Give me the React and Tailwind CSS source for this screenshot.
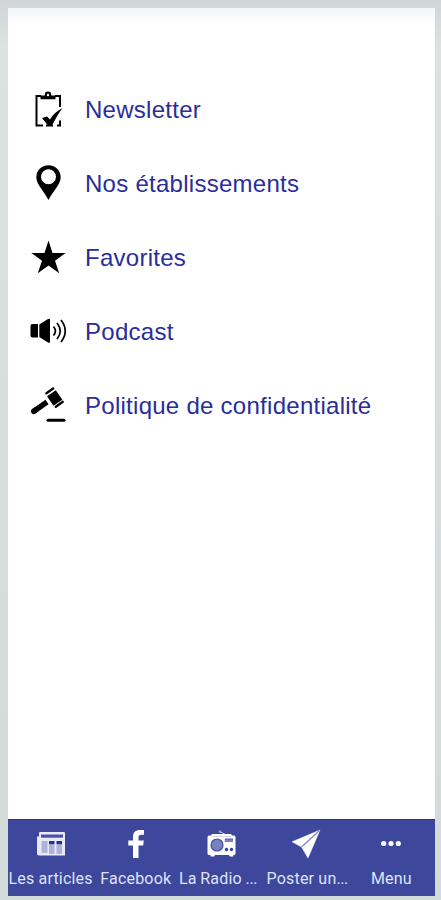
import React from "react";

const ClipboardIcon = () => (
  <svg viewBox="0 0 40 40" className="w-10 h-10" fill="none" stroke="#000" strokeWidth="2">
    <path d="M13 6H8.500V35.500h6.500M18 35.500h7M29 35.500h3v-5M27 6h5v11" />
    <path d="M12.500 9.200V5.500h4.300V4.600a3.200 3.200 0 0 1 6.400 0v.9h4.300v3.700z" fill="#000" stroke="none" />
    <circle cx="20" cy="5" r="1.200" fill="#fff" stroke="none" />
    <path d="M14 28l5-1.500 3 3c3-4.800 6.500-8.500 12.500-11.500-4 5-7 11-10.500 17.500h-4z" fill="#000" stroke="none" />
  </svg>
);

const PinIcon = () => (
  <svg viewBox="0 0 40 40" className="w-10 h-10">
    <path
      d="M20.500 1.200C13.500 1.200 8.300 6.500 8.300 13c0 8 8.200 14.500 12.200 23 4-8.500 12.200-15 12.200-23 0-6.500-5.200-11.800-12.200-11.800zm0 4a7.500 7.500 0 1 1 0 15 7.500 7.500 0 0 1 0-15z"
      fill="#000"
      fillRule="evenodd"
    />
  </svg>
);

const StarIcon = () => (
  <svg viewBox="0 0 40 40" className="w-10 h-10">
    <path d="M20.500 2.500l4 12.400h13.200L27 22.700l4.200 12.600-10.700-7.800-10.700 7.800L14 22.700 3.300 14.900h13.200z" fill="#000" />
  </svg>
);

const SpeakerIcon = () => (
  <svg viewBox="0 0 40 40" className="w-10 h-10">
    <path d="M4.500 12H10v13.500H4.500A2 2 0 0 1 2.500 23.500V14a2 2 0 0 1 2-2zM11.300 12.500L20 7q2-1 2 .8v22q0 1.800-2 .8l-8.700-5.500z" fill="#000" />
    <path
      d="M25.500 14.500q3.800 4.500 0 9M29 11q6.500 8 0 16M33 8q8.500 11 0 22"
      fill="none"
      stroke="#000"
      strokeWidth="1.700"
    />
  </svg>
);

const GavelIcon = () => (
  <svg viewBox="0 0 40 40" className="w-10 h-10">
    <g stroke="#000" fill="none">
      <path d="M5.500 25.500L19 16" strokeWidth="5.400" />
      <path d="M5.800 25.300L8 23.800" strokeWidth="5.600" strokeLinecap="round" />
      <path d="M18.400 7.300l6.800-4.800M27.800 20.800l7-5" strokeWidth="2.300" strokeLinecap="round" />
      <path d="M20 34.300h16" strokeWidth="3" strokeLinecap="round" />
    </g>
    <path d="M19 10.300l8.800-6 6.500 9.500-8.800 6z" fill="#000" />
  </svg>
);

const NewsIcon = () => (
  <svg viewBox="0 0 30 30" className="w-[30px] h-[30px]">
    <path d="M4 3h24a1 1 0 0 1 1 1v22.500H2.500l-1.500-1V7.500h2V4a1 1 0 0 1 1-1z" fill="#e8eafc" />
    <path d="M5 5.500h22v3.200H5z" fill="#4952a2" />
    <path d="M5.500 12h6v12h-6zM13 15.500h5.500V25H13zM20.500 15.500H26V25h-5.500z" fill="#adb2d9" />
    <path d="M13 12h5.500v3.200H13zM20.500 12H26v3.200h-5.500z" fill="#282f8c" />
  </svg>
);

const FacebookIcon = () => (
  <svg viewBox="0 0 30 30" className="w-[30px] h-[30px]">
    <path d="M12 29V16.500H7.300v-5H12V8.200C12 3.500 14.500 1 19 1h4v4.800h-2.500c-2.300 0-3 .8-3 2.800v2.900h5.300l-.6 5h-4.700V29z" fill="#fff" />
  </svg>
);

const RadioIcon = () => (
  <svg viewBox="0 0 30 30" className="w-[30px] h-[30px]">
    <path d="M14.500 3l6 3" stroke="#c9cdf0" strokeWidth="1" />
    <circle cx="14" cy="2.700" r="1.400" fill="#8f97d0" />
    <path
      d="M3 6.500h2L6 5h19l1 1.500h2A1.500 1.500 0 0 1 29.500 8v16.500A1.500 1.500 0 0 1 28 26h-.7v1.500h-3.500L23 26H9l-.8 1.500H4.500V26H3a1.500 1.500 0 0 1-1.500-1.500V8A1.500 1.500 0 0 1 3 6.500z"
      fill="#fff"
    />
    <path d="M6 7.400h19" stroke="#a9afd9" strokeWidth=".6" />
    <circle cx="11" cy="16" r="6" fill="#7a82be" stroke="#444d9f" strokeWidth="1.200" />
    <path d="M18.800 9.500h8.200v3.300h-8.200z" fill="#535caa" />
    <path d="M18.800 11.200h8.200" stroke="#abb0dc" strokeWidth=".7" />
    <circle cx="20.500" cy="20.500" r="1.700" fill="#353e98" />
    <circle cx="25.500" cy="20.500" r="1.700" fill="#353e98" />
  </svg>
);

const PlaneIcon = () => (
  <svg viewBox="0 0 30 30" className="w-[30px] h-[30px]">
    <path d="M29 1L1 12.800l9.500 5.200L17 29z" fill="#fff" stroke="#fff" strokeWidth=".5" />
    <path d="M28.500 1.500L10.500 18" stroke="#7a82be" strokeWidth="1.100" />
  </svg>
);

const DotsIcon = () => (
  <svg viewBox="0 0 30 30" className="w-[30px] h-[30px]" fill="#fff">
    <circle cx="7.700" cy="14.500" r="2.600" />
    <circle cx="15" cy="14.500" r="2.600" />
    <circle cx="22.300" cy="14.500" r="2.600" />
  </svg>
);

const menuItems = [
  { label: "Newsletter", icon: ClipboardIcon },
  { label: "Nos établissements", icon: PinIcon },
  { label: "Favorites", icon: StarIcon },
  { label: "Podcast", icon: SpeakerIcon },
  { label: "Politique de confidentialité", icon: GavelIcon },
];

const tabs = [
  { label: "Les articles", icon: NewsIcon },
  { label: "Facebook", icon: FacebookIcon },
  { label: "La Radio ", more: true, icon: RadioIcon, labelClass: "pr-1.5 [word-spacing:-0.5px]" },
  { label: "Poster un", more: true, icon: PlaneIcon, labelClass: "pl-0.5" },
  { label: "Menu", icon: DotsIcon },
];

const App = () => {
  return (
    <div className="h-[900px] w-[441px] bg-gradient-to-b from-[#d0d5d6] via-[#dce1e1] via-5% to-[#d3dada] pt-[8px] pr-[6px] pb-[4px] pl-[8px]">
      <main className="flex h-full flex-col bg-white bg-gradient-to-b from-[#f4f6f6] to-white to-2%">
        {/* Menu list */}
        <ul className="flex-1 pt-[65px] pl-5">
          {menuItems.map(({ label, icon: Icon }) => (
            <li key={label}>
              <button type="button" className="flex h-[74px] items-center gap-[17px]">
                <Icon />
                <span className="whitespace-nowrap font-['Liberation_Sans',sans-serif] text-2xl tracking-[0.27px] text-[#2a2d9b]">
                  {label}
                </span>
              </button>
            </li>
          ))}
        </ul>

        {/* Bottom tab bar */}
        <nav className="grid h-[77px] shrink-0 grid-cols-5 border-t border-[#26328a] bg-[#3d479b] pr-px">
          {tabs.map(({ label, more, icon: Icon, labelClass = "" }) => (
            <button key={label} type="button" className="flex min-w-0 flex-col items-center pt-[9px]">
              <Icon />
              <span
                className={`mt-[8px] whitespace-nowrap font-[Roboto,sans-serif] text-base leading-6 tracking-[0.2px] text-[#dfe2fb] ${labelClass}`}
              >
                {label}
                {more && <span className="tracking-[-0.4px]">...</span>}
              </span>
            </button>
          ))}
        </nav>
      </main>
    </div>
  );
};

export default App;
